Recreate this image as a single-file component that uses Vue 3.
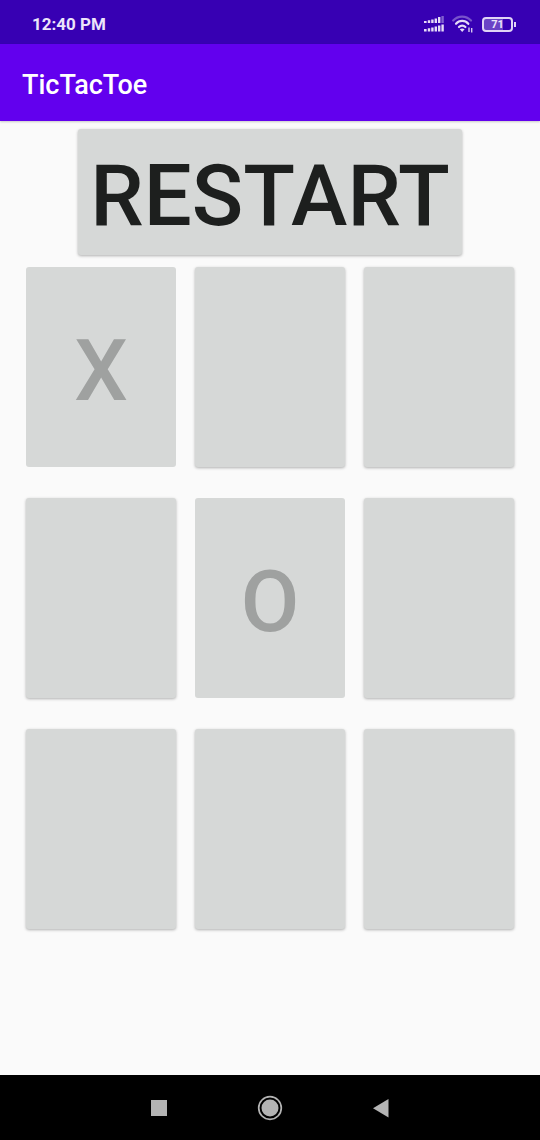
<script setup>
import { ref } from 'vue'

const empty = () => Array(9).fill('')
const cells = ref(['X', '', '', '', 'O', '', '', '', ''])

function play(i) {
  const taken = cells.value.filter(Boolean).length
  cells.value[i] = taken % 2 ? 'O' : 'X'
}

function restart() {
  cells.value = empty()
}
</script>

<template>
  <div class="screen">
    <div class="status">
      <span class="time">12:40 PM</span>
      <div class="indicators">
        <svg class="signal" width="20" height="16" viewBox="0 0 20 16" aria-hidden="true">
          <g fill="#e6dcf7">
            <path d="M0 5h2.6v2H0zM3.8 4.3h2.4V7H3.8zM7.2 3.5h2.4V7H7.2zM10.6 2.5H13V7h-2.4zM14 1h2.4v6H14z" />
            <path d="M0 13h2.6v2.5H0zM3.8 12.3h2.4v3.2H3.8zM7.2 11.5h2.4v4H7.2zM10.6 10.5H13v5h-2.4zM14 9.5h2.4v6H14zM17.4 8.5h2.4v7h-2.4z" />
          </g>
          <path d="M17.4 0h2.4v7h-2.4z" fill="#8060cf" />
        </svg>
        <svg class="wifi" width="22" height="18" viewBox="0 0 22 18" aria-hidden="true">
          <g fill="none" stroke-linecap="round" stroke-width="2.2">
            <path d="M1.2 5.500C6 .2 14 .2 19 5.500" stroke="#7853cb" />
            <path d="M4 8.800c3.400-3.800 9-3.800 12.300 0" stroke="#e6dcf7" />
            <path d="M7 12c1.800-1.900 4.600-1.900 6.400 0" stroke="#e6dcf7" />
          </g>
          <path d="M7.800 14.300q2.400-1.700 4.800 0L10.200 17z" fill="#e6dcf7" />
          <path d="M17 12.500v4.500M19.700 13v4.500" stroke="#d5c6f0" stroke-width="1.400" />
        </svg>
        <div class="battery"><span>71</span></div>
      </div>
    </div>

    <header class="appbar"><h1>TicTacToe</h1></header>

    <main class="game">
      <button class="tile restart" type="button" @click="restart">RESTART</button>
      <div class="board">
        <button
          v-for="(mark, i) in cells"
          :key="i"
          class="tile cell"
          type="button"
          :disabled="mark !== ''"
          :aria-label="mark || `Cell ${i + 1}`"
          @click="play(i)"
        >{{ mark }}</button>
      </div>
    </main>

    <nav class="navbar">
      <button type="button" aria-label="Recent apps">
        <svg width="26" height="26" viewBox="0 0 26 26"><path d="M5 5h16v16H5z" fill="#b4b4b4" /></svg>
      </button>
      <button type="button" aria-label="Home">
        <svg width="26" height="26" viewBox="0 0 26 26">
          <circle cx="13" cy="13" r="11.300" fill="none" stroke="#b4b4b4" stroke-width="1.700" />
          <circle cx="13" cy="13" r="8.500" fill="#b4b4b4" />
        </svg>
      </button>
      <button type="button" aria-label="Back">
        <svg width="26" height="26" viewBox="0 0 26 26"><path d="M20.500 4v18.500L5 13.200z" fill="#b4b4b4" /></svg>
      </button>
    </nav>
  </div>
</template>

<style>
body {
  margin: 0;
  background: #fafafa;
}
</style>

<style scoped>
.screen {
  display: flex;
  flex-direction: column;
  min-height: 100vh;
  background: #fafafa;
  font-family: Roboto, "Noto Sans", sans-serif;
}

button {
  margin: 0;
  border: 0;
  font-family: inherit;
}

.status {
  display: flex;
  align-items: center;
  justify-content: space-between;
  height: 44px;
  padding: 4px 24px 0 32px;
  box-sizing: border-box;
  background: #3700b3;
  color: #ece4fa;
}

.time {
  font-size: 17px;
  line-height: 20px;
  font-weight: 700;
}

.indicators {
  display: flex;
  align-items: center;
  gap: 8px;
}

.battery {
  position: relative;
  box-sizing: border-box;
  width: 31px;
  height: 15px;
  margin-right: 3px;
  border: 2px solid #e0d4f5;
  border-radius: 4px;
  background: linear-gradient(90deg, #6a43c6 70%, #3700b3 70%);
  font-size: 11px;
  line-height: 12px;
  font-weight: 700;
  text-align: center;
}

.battery::after {
  content: "";
  position: absolute;
  top: 3px;
  right: -5px;
  width: 2px;
  height: 5px;
  background: #e0d4f5;
}

.appbar {
  display: flex;
  align-items: center;
  height: 77px;
  padding: 4px 22px 0;
  box-sizing: border-box;
  background: #6200ee;
  box-shadow: 0 1px 2px rgba(0, 0, 0, 0.2);
}

h1 {
  margin: 0;
  color: #fff;
  font-size: 27px;
  line-height: 32px;
  font-weight: 500;
}

.game {
  flex: 1;
  display: flex;
  flex-direction: column;
  align-items: center;
  gap: 12px;
  padding: 8px 26px 40px;
}

.tile {
  border-radius: 3px;
  background: #d6d8d7;
  box-shadow: 0 1px 3px rgba(0, 0, 0, 0.3);
  color: #1d1f1e;
  font-size: 85px;
  line-height: 100px;
  font-weight: 500;
}

.restart {
  padding: 17px 12px 9px;
}

.board {
  align-self: stretch;
  display: grid;
  grid-template-columns: repeat(3, 1fr);
  grid-auto-rows: 200px;
  gap: 31px 19px;
}

.cell {
  padding: 8px 0 0;
}

.cell:disabled {
  box-shadow: none;
  color: #9fa1a0;
}

.navbar {
  display: flex;
  align-items: center;
  justify-content: center;
  gap: 85px;
  height: 65px;
  background: #000;
}

.navbar button {
  padding: 0;
  background: none;
  line-height: 0;
}
</style>
